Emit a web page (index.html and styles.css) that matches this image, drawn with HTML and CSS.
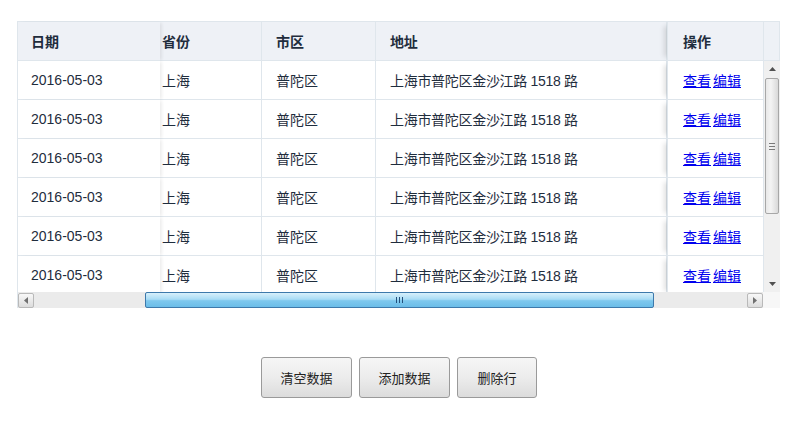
FILE: index.html
```html
<!DOCTYPE html>
<html lang="zh-CN">
<head>
    <meta charset="UTF-8">
    <title>表格</title>
    <link rel="stylesheet" href="styles.css">
</head>
<body>
    <div class="grid">
        <div class="row row--head">
            <div class="cell cell--date fixed-left">日期</div>
            <div class="cell cell--prov">省份</div>
            <div class="cell cell--city">市区</div>
            <div class="cell cell--addr">地址</div>
            <div class="cell cell--ops fixed-right">操作</div>
            <div class="cell cell--gutter"></div>
        </div>
        <div class="grid__body">
            <div class="grid__rows">
                <div class="row">
                    <div class="cell cell--date fixed-left">2016-05-03</div>
                    <div class="cell cell--prov">上海</div>
                    <div class="cell cell--city">普陀区</div>
                    <div class="cell cell--addr">上海市普陀区金沙江路 1518 路</div>
                    <div class="cell cell--ops fixed-right"><a href="#">查看</a> <a href="#">编辑</a></div>
                </div>
                <div class="row">
                    <div class="cell cell--date fixed-left">2016-05-03</div>
                    <div class="cell cell--prov">上海</div>
                    <div class="cell cell--city">普陀区</div>
                    <div class="cell cell--addr">上海市普陀区金沙江路 1518 路</div>
                    <div class="cell cell--ops fixed-right"><a href="#">查看</a> <a href="#">编辑</a></div>
                </div>
                <div class="row">
                    <div class="cell cell--date fixed-left">2016-05-03</div>
                    <div class="cell cell--prov">上海</div>
                    <div class="cell cell--city">普陀区</div>
                    <div class="cell cell--addr">上海市普陀区金沙江路 1518 路</div>
                    <div class="cell cell--ops fixed-right"><a href="#">查看</a> <a href="#">编辑</a></div>
                </div>
                <div class="row">
                    <div class="cell cell--date fixed-left">2016-05-03</div>
                    <div class="cell cell--prov">上海</div>
                    <div class="cell cell--city">普陀区</div>
                    <div class="cell cell--addr">上海市普陀区金沙江路 1518 路</div>
                    <div class="cell cell--ops fixed-right"><a href="#">查看</a> <a href="#">编辑</a></div>
                </div>
                <div class="row">
                    <div class="cell cell--date fixed-left">2016-05-03</div>
                    <div class="cell cell--prov">上海</div>
                    <div class="cell cell--city">普陀区</div>
                    <div class="cell cell--addr">上海市普陀区金沙江路 1518 路</div>
                    <div class="cell cell--ops fixed-right"><a href="#">查看</a> <a href="#">编辑</a></div>
                </div>
                <div class="row">
                    <div class="cell cell--date fixed-left">2016-05-03</div>
                    <div class="cell cell--prov">上海</div>
                    <div class="cell cell--city">普陀区</div>
                    <div class="cell cell--addr">上海市普陀区金沙江路 1518 路</div>
                    <div class="cell cell--ops fixed-right"><a href="#">查看</a> <a href="#">编辑</a></div>
                </div>
            </div>
            <!-- vertical scrollbar -->
            <div class="vbar">
                <div class="vbar__arrow">
                    <svg width="7" height="4" viewBox="0 0 7 4"><path d="M0 4 L3.5 0 L7 4 Z" fill="#505050"/></svg>
                </div>
                <div class="vbar__gap"></div>
                <div class="vbar__thumb">
                    <svg width="6" height="7" viewBox="0 0 6 7"><path d="M0 0.5H6M0 3.5H6M0 6.5H6" stroke="#7a7a7a" stroke-width="1"/></svg>
                </div>
                <div class="vbar__track"></div>
                <div class="vbar__arrow">
                    <svg width="7" height="4" viewBox="0 0 7 4"><path d="M0 0 L3.5 4 L7 0 Z" fill="#505050"/></svg>
                </div>
            </div>
        </div>
        <!-- horizontal scrollbar -->
        <div class="hbar">
            <div class="hbar__btn">
                <svg width="4" height="7" viewBox="0 0 4 7"><path d="M4 0 L0 3.5 L4 7 Z" fill="#707070"/></svg>
            </div>
            <div class="hbar__track hbar__track--left"></div>
            <div class="hbar__thumb">
                <svg width="7" height="6" viewBox="0 0 7 6"><path d="M0.5 0V6M3.5 0V6M6.5 0V6" stroke="#23507c" stroke-width="1"/></svg>
            </div>
            <div class="hbar__track"></div>
            <div class="hbar__btn">
                <svg width="4" height="7" viewBox="0 0 4 7"><path d="M0 0 L4 3.5 L0 7 Z" fill="#707070"/></svg>
            </div>
            <div class="hbar__corner"></div>
        </div>
    </div>

    <div class="actions">
        <button class="btn">清空数据</button>
        <button class="btn">添加数据</button>
        <button class="btn btn--short">删除行</button>
    </div>
</body>
</html>
```

FILE: styles.css
```css
:root {
   --border: #dfe6ec;
   --head-bg: #eef1f6;
   --text: #1f2d3d;
}

* {
   margin: 0;
   padding: 0;
   box-sizing: border-box;
}

body {
   font-family: "Liberation Sans", "Noto Sans CJK SC", sans-serif;
   font-size: 14px;
   color: var(--text);
   background-color: #ffffff;
}

.grid {
   width: 763px;
   margin: 21px 0 0 17px;
   border-top: 1px solid var(--border);
   border-left: 1px solid var(--border);
}

.row {
   display: flex;
   height: 39px;
}

.row--head {
   height: 39px;
   background-color: var(--head-bg);
   font-weight: bold;
}

.cell {
   display: flex;
   align-items: center;
   padding-left: 14px;
   border-right: 1px solid var(--border);
   border-bottom: 1px solid var(--border);
   white-space: nowrap;
   overflow: hidden;
   background-color: #ffffff;
}

.row--head .cell {
   background-color: var(--head-bg);
}

.cell--date {
   width: 142px;
   padding-left: 13px;
   border-right: none;
}

.cell--prov {
   width: 102px;
   padding-left: 2px;
}

.cell--city {
   width: 114px;
}

.cell--addr {
   width: 291px;
   letter-spacing: -0.3px;
}

.cell--ops {
   width: 97px;
   padding-left: 15px;
   border-left: 1px solid var(--border);
}

.cell--gutter {
   width: 16px;
   padding: 0;
}

.fixed-left {
   position: relative;
   z-index: 1;
   overflow: visible;
   box-shadow: 3px 0 3px -1px rgba(0, 0, 0, 0.07);
}

.fixed-right {
   position: relative;
   z-index: 1;
   overflow: visible;
   box-shadow: -7px 0 5px -4px rgba(0, 0, 0, 0.12);
}

.cell--ops a {
   color: #0000ee;
   text-decoration: underline;
   margin-right: 2px;
}

.grid__body {
   display: flex;
   height: 231px;
   overflow: hidden;
}

.grid__rows {
   width: 746px;
}

/* vertical scrollbar */
.vbar {
   width: 16px;
   display: flex;
   flex-direction: column;
   background-color: #f0f0f0;
}

.vbar__arrow {
   height: 16px;
   display: flex;
   align-items: center;
   justify-content: center;
}

.vbar__gap {
   height: 1px;
}

.vbar__thumb {
   height: 136px;
   margin: 0 1px;
   border: 1px solid #a7a7a7;
   border-radius: 2px;
   background: linear-gradient(to right, #e8e8e8, #f4f4f4 40%, #d9d9d9);
   display: flex;
   align-items: center;
   justify-content: center;
}

.vbar__track {
   flex: 1;
}

/* horizontal scrollbar */
.hbar {
   display: flex;
   height: 16px;
   background-color: #ebebeb;
}

.hbar__btn {
   width: 16px;
   height: 15px;
   margin-top: 1px;
   border: 1px solid #b9b9b9;
   border-radius: 2px;
   background: linear-gradient(#f8f8f8, #dcdcdc);
   display: flex;
   align-items: center;
   justify-content: center;
}

.hbar__track {
   width: 93px;
}

.hbar__track--left {
   width: 111px;
}

.hbar__thumb {
   width: 509px;
   border: 1px solid #3d79ab;
   border-radius: 2px;
   background: linear-gradient(#d8f0fb, #a9dcf5 45%, #7ec8ee 55%, #6bbde8);
   display: flex;
   align-items: center;
   justify-content: center;
}

.hbar__corner {
   width: 17px;
   background-color: #f7f7f7;
}

/* buttons */
.actions {
   display: flex;
   justify-content: center;
   gap: 7px;
   margin-top: 49px;
   padding-right: 2px;
}

.btn {
   width: 91px;
   height: 41px;
   font-family: "Liberation Sans", "Noto Sans CJK SC", sans-serif;
   font-size: 13px;
   color: #222222;
   border: 1px solid #9a9a9a;
   border-radius: 3px;
   background: linear-gradient(#f6f6f6, #ececec 50%, #dcdcdc);
   cursor: pointer;
}

.btn--short {
   width: 80px;
}
```
